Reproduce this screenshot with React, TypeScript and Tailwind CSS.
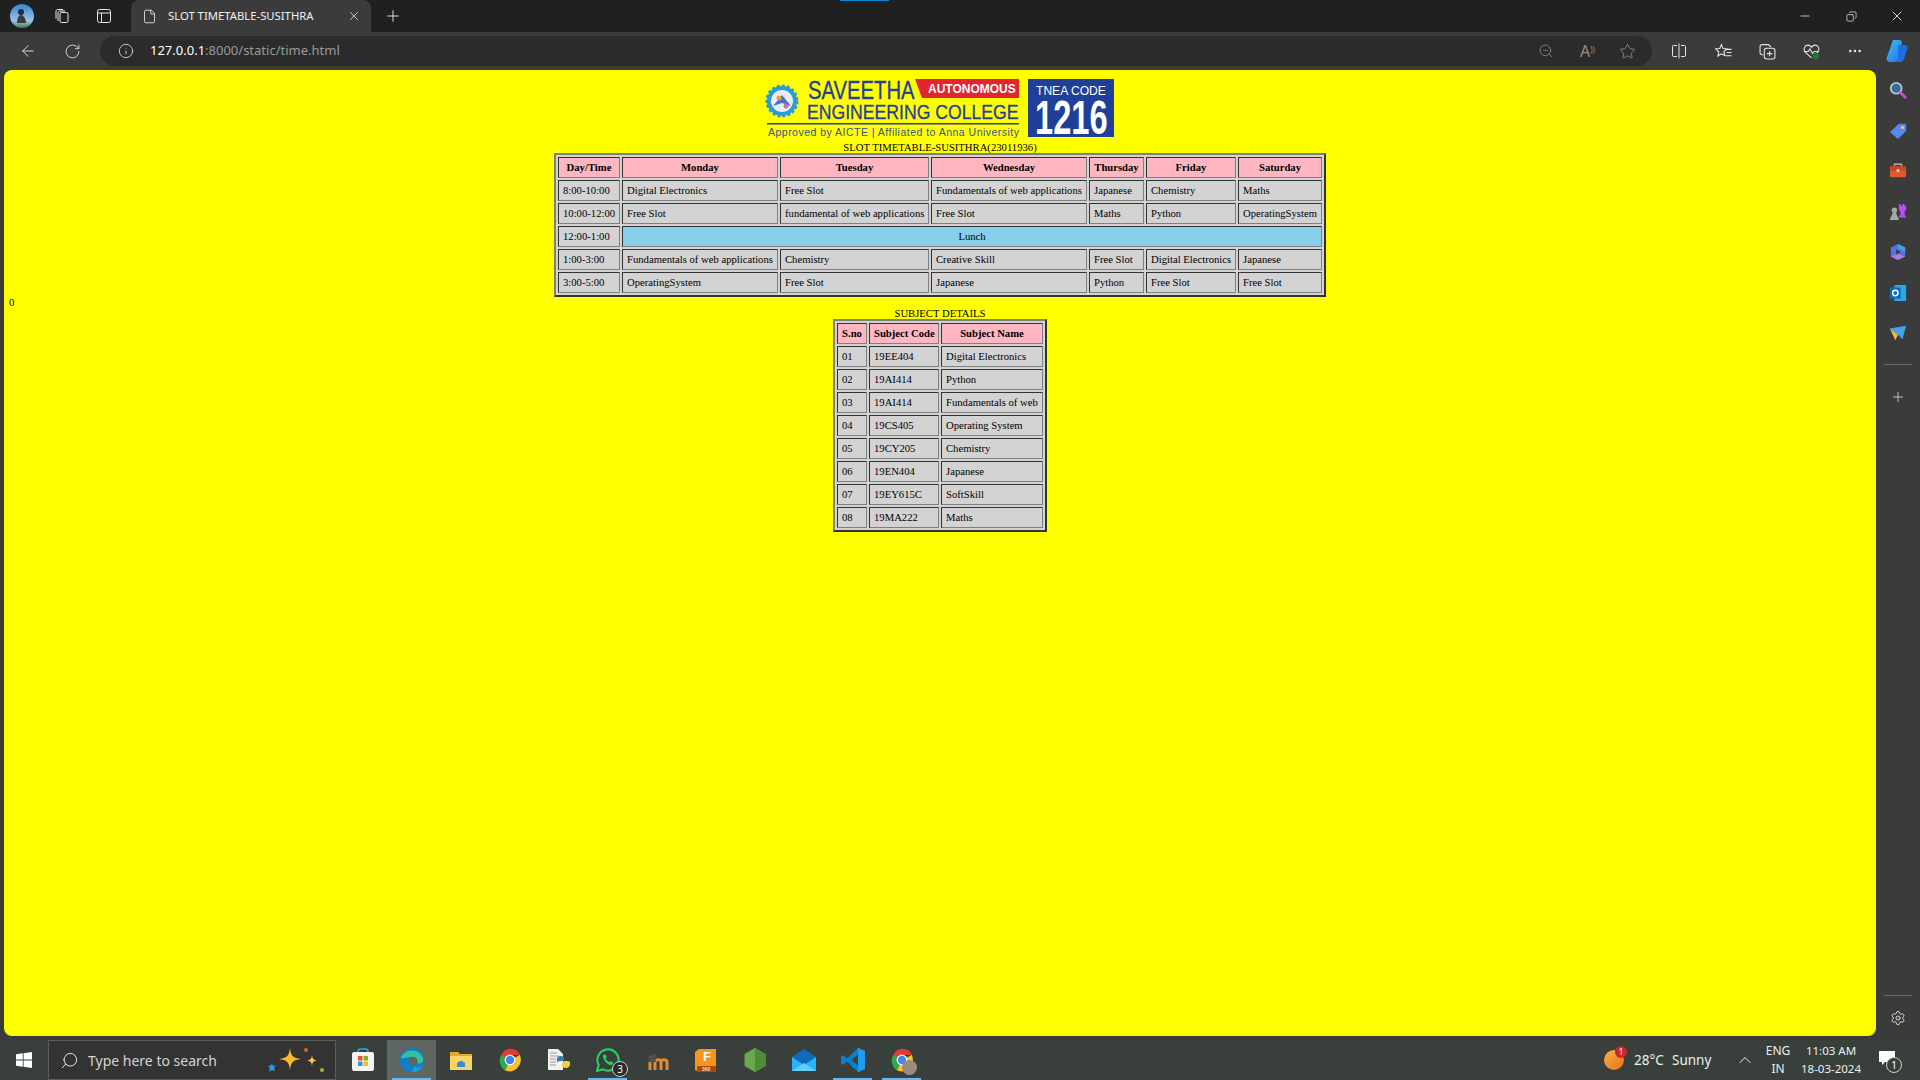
import {
  ArrowLeft,
  ChevronUp,
  Copy,
  Ellipsis,
  File,
  Info,
  Minus,
  Plus,
  RotateCw,
  Search,
  Settings,
  Star,
  X,
  ZoomOut,
} from "lucide-react";

const days = ["Monday", "Tuesday", "Wednesday", "Thursday", "Friday", "Saturday"];

const slots = [
  ["8:00-10:00", "Digital Electronics", "Free Slot", "Fundamentals of web applications", "Japanese", "Chemistry", "Maths"],
  ["10:00-12:00", "Free Slot", "fundamental of web applications", "Free Slot", "Maths", "Python", "OperatingSystem"],
  ["12:00-1:00"],
  ["1:00-3:00", "Fundamentals of web applications", "Chemistry", "Creative Skill", "Free Slot", "Digital Electronics", "Japanese"],
  ["3:00-5:00", "OperatingSystem", "Free Slot", "Japanese", "Python", "Free Slot", "Free Slot"],
];

const subjects = [
  ["01", "19EE404", "Digital Electronics"],
  ["02", "19AI414", "Python"],
  ["03", "19AI414", "Fundamentals of web"],
  ["04", "19CS405", "Operating System"],
  ["05", "19CY205", "Chemistry"],
  ["06", "19EN404", "Japanese"],
  ["07", "19EY615C", "SoftSkill"],
  ["08", "19MA222", "Maths"],
];

const slotWidths = ["w-[62px]", "w-[156px]", "w-[149px]", "w-[156px]", "w-[55px]", "w-[90px]", "w-[84px]"];
const subjectWidths = ["w-[30px]", "w-[70px]", "w-[102px]"];

const tableCls =
  "table-fixed border-separate border-spacing-[2px] border-2 border-t-[#808080] border-l-[#808080] border-r-[#333333] border-b-[#333333] bg-[#d3d3d3]";
const cellCls =
  "h-[21px] border border-t-[#333333] border-l-[#333333] border-r-[#808080] border-b-[#808080] px-[4px] pt-0 pb-[2px] whitespace-nowrap overflow-hidden";
const headCls = `${cellCls} bg-[#ffb6c1] text-center font-bold`;
const bodyCls = `${cellCls} bg-[#d3d3d3] text-left font-normal`;

function CollegeLogo() {
  return (
    <svg viewBox="0 0 350 63" className="h-[63px] w-[350px] shrink-0">
      <circle cx="17" cy="23" r="15" fill="#2b9bd8" stroke="#2b9bd8" strokeWidth="3" strokeDasharray="3 2" />
      <circle cx="17" cy="23" r="11" fill="#e9eef5" />
      <path d="M8 28l9-11 9 11-9-3z" fill="#4f6fc0" />
      <circle cx="14" cy="20" r="2.5" fill="#d9a441" />
      <circle cx="21" cy="28" r="2.5" fill="#c06fb0" />
      <text transform="translate(43 21) scale(0.765 1)" fontFamily="Liberation Sans" fontSize="26.5" fill="#23409a" stroke="#23409a" strokeWidth="0.3">
        SAVEETHA
      </text>
      <polygon points="150,1 254,1 254,20 157,20" fill="#e3262e" />
      <text x="163" y="15" fontFamily="Liberation Sans" fontSize="12" fontWeight="700" fill="#ffffff">
        AUTONOMOUS
      </text>
      <text transform="translate(42 41) scale(0.84 1)" fontFamily="Liberation Sans" fontSize="21" fill="#23409a" stroke="#23409a" strokeWidth="0.3">
        ENGINEERING COLLEGE
      </text>
      <rect x="2" y="45" width="252" height="1.5" fill="#23409a" />
      <text x="3" y="58" fontFamily="Liberation Sans" fontSize="10.5" fill="#34558f" textLength="251" lengthAdjust="spacing">
        Approved by AICTE | Affiliated to Anna University
      </text>
      <rect x="263" y="1" width="86" height="58" fill="#1f3f98" />
      <text transform="translate(271 17) scale(0.93 1)" fontFamily="Liberation Sans" fontSize="13" fill="#ffffff">
        TNEA CODE
      </text>
      <text transform="translate(270 56) scale(0.68 1)" fontFamily="Liberation Sans" fontSize="48" fontWeight="700" fill="#ffffff">
        1216
      </text>
    </svg>
  );
}

function ChromeIcon({ size = 24 }: { size?: number }) {
  return (
    <svg viewBox="0 0 24 24" width={size} height={size}>
      <path d="M12 12L3.3 7A10 10 0 0 1 21.9 7H12z" fill="#e33b2e" />
      <path d="M12 12L3.3 7A11.8 11.8 0 0 0 7 22.6L12 12z" fill="#2fa84f" />
      <path d="M12 12L21.9 7A11.8 11.8 0 0 1 7 22.6L12 12z" fill="#fbc02d" />
      <circle cx="12" cy="12" r="5.4" fill="#ffffff" />
      <circle cx="12" cy="12" r="4.2" fill="#4285f4" />
    </svg>
  );
}

function EdgeIcon() {
  return (
    <svg viewBox="0 0 24 24" width="24" height="24">
      <circle cx="12" cy="12" r="12" fill="#0f7fc9" />
      <path d="M1 10C3 2 18 -2 23 10c1 5-3 6-6 5 2-4-2-7-6-6-4 0-8 2-10 1z" fill="#35c1a0" />
      <circle cx="13" cy="13.5" r="4.5" fill="#5d6660" />
      <path d="M12 24c5 0 9-2 11-6-3 2-7 2-9 0 0 2-1 4-2 6z" fill="#1b9de2" />
    </svg>
  );
}

function TaskIcon({ name }: { name: string }) {
  if (name === "store")
    return (
      <svg viewBox="0 0 24 24" width="24" height="24">
        <path d="M7 5V3.500C7 2 8 1 9.500 1h5C16 1 17 2 17 3.500V5" fill="none" stroke="#2aa6e6" strokeWidth="1.6" />
        <rect x="1" y="4" width="22" height="19" rx="2" fill="#f3f3f3" />
        <rect x="7" y="8" width="4.5" height="4.5" fill="#e8512a" />
        <rect x="12.5" y="8" width="4.5" height="4.5" fill="#7ab51d" />
        <rect x="7" y="13.5" width="4.5" height="4.5" fill="#1d9fe0" />
        <rect x="12.5" y="13.5" width="4.5" height="4.5" fill="#fbbb14" />
      </svg>
    );
  if (name === "edge") return <EdgeIcon />;
  if (name === "folder")
    return (
      <svg viewBox="0 0 24 24" width="24" height="24">
        <path d="M1 4h8l2 2h12v16H1z" fill="#e5a92e" />
        <rect x="1" y="8" width="22" height="14" fill="#fbd466" />
        <path d="M8 19v-4l4-2.500 4 2.500v4z" fill="#2d8fd5" />
      </svg>
    );
  if (name === "chrome") return <ChromeIcon />;
  if (name === "python")
    return (
      <svg viewBox="0 0 24 24" width="24" height="24">
        <path d="M1 1h10l5 5v16H1z" fill="#f1f1f1" />
        <path d="M3 5h7M3 8h9M3 11h6M3 14h6M3 17h6" stroke="#9a9a9a" strokeWidth="1" />
        <path d="M10 11c0-2 1-3 3.500-3S17 9 17 11v2h-4c-2 0-3 1-3 2z" fill="#3b77a8" />
        <path d="M23 16c0 2-1 4-4 4s-4-1-4-3v-1h3c2 0 4-1 5-3z" fill="#f6cf3e" />
        <path d="M17 13h4c1 0 2 1 2 3h-8z" fill="#f6cf3e" />
      </svg>
    );
  if (name === "whatsapp")
    return (
      <svg viewBox="0 0 24 24" width="24" height="24">
        <path d="M1 23l1.700-6A10.600 10.600 0 1 1 7 21.300z" fill="none" stroke="#25d366" strokeWidth="2" />
        <path d="M8 6.500c-1.500 1-1.500 3 .5 6s4.500 5 7 4.500c1.500-.4 2-1.500 1.500-2.500l-2.500-1.500-1.200 1.200c-1.500-.6-3-2-3.700-3.700L10.800 9 9.500 6.500z" fill="#25d366" />
      </svg>
    );
  if (name === "moodle")
    return (
      <svg viewBox="0 0 24 24" width="24" height="24">
        <path d="M1 10l8-4 4 2-7 3z" fill="#55504c" />
        <path d="M5 22v-8M10 22v-8c0-2 6-4 6 0v8M16 14c0-3 6-3 6 0v8" fill="none" stroke="#e08a35" strokeWidth="3" />
        <path d="M5 14c1-3 4-3 5 0" fill="none" stroke="#55504c" strokeWidth="3" />
      </svg>
    );
  if (name === "fusion")
    return (
      <svg viewBox="0 0 24 24" width="24" height="24">
        <path d="M1 4l4-3h17v23H5l-4-2z" fill="#f7941d" />
        <rect x="3" y="18" width="19" height="6" rx="1" fill="#a8480b" />
        <text x="9" y="13" fontFamily="Liberation Sans" fontSize="13" fontWeight="700" fill="#ffffff">F</text>
        <text x="8" y="23" fontFamily="Liberation Sans" fontSize="5" fontWeight="700" fill="#f3d9c0">360</text>
      </svg>
    );
  if (name === "node")
    return (
      <svg viewBox="0 0 24 24" width="24" height="24">
        <path d="M12 0l10.500 6v12L12 24 1.500 18V6z" fill="#6aa84f" />
        <path d="M12 0l10.500 6v12L12 24z" fill="#4e8c3a" />
      </svg>
    );
  if (name === "mail")
    return (
      <svg viewBox="0 0 24 24" width="24" height="24">
        <path d="M0 9l12-8 12 8v14H0z" fill="#0f6cbd" />
        <path d="M0 9l12 8 12-8v14H0z" fill="#2bb4f4" />
        <path d="M0 23l12-8 12 8z" fill="#5fd0fb" />
      </svg>
    );
  if (name === "vscode")
    return (
      <svg viewBox="0 0 24 24" width="24" height="24">
        <path d="M17 0l7 3v18l-7 3L6 13.500 2 17l-2-1.500v-7L2 7l4 3.500z" fill="#0a7fcf" />
        <path d="M17 6.500L10.500 12 17 17.500z" fill="#39403c" />
        <path d="M17 0l7 3v18l-7 3z" fill="#1f9cf0" />
      </svg>
    );
  return (
    <div className="relative">
      <ChromeIcon />
      <span className="absolute -bottom-[3px] -right-[3px] h-[15px] w-[15px] rounded-full bg-[#9a8c7c]" />
    </div>
  );
}

const taskItems = [
  { name: "store" },
  { name: "edge", active: true },
  { name: "folder" },
  { name: "chrome" },
  { name: "python" },
  { name: "whatsapp", running: true, badge: "3" },
  { name: "moodle" },
  { name: "fusion" },
  { name: "node" },
  { name: "mail" },
  { name: "vscode", running: true },
  { name: "chromeProfile", running: true },
];

function SideIcon({ name }: { name: string }) {
  if (name === "search")
    return (
      <svg viewBox="0 0 20 20" width="18" height="18">
        <circle cx="8" cy="8" r="6" fill="#2f6f96" stroke="#b9c4cc" strokeWidth="2" />
        <path d="M13 13l5 5" stroke="#c94fd8" strokeWidth="3" strokeLinecap="round" />
      </svg>
    );
  if (name === "tag")
    return (
      <svg viewBox="0 0 20 20" width="18" height="18">
        <path d="M1 11L11 2h8v8l-9 9z" fill="#5b84f0" strokeLinejoin="round" />
        <circle cx="15" cy="6" r="1.800" fill="#f2c94c" />
      </svg>
    );
  if (name === "tools")
    return (
      <svg viewBox="0 0 20 20" width="18" height="18">
        <path d="M6 5V2.500h8V5" fill="none" stroke="#b0b0b0" strokeWidth="1.500" />
        <rect x="1" y="5" width="18" height="12" rx="1.500" fill="#e05a2b" />
        <rect x="1" y="5" width="18" height="5" fill="#c9481f" />
        <rect x="8.500" y="8" width="3" height="3" fill="#d9d9d9" />
      </svg>
    );
  if (name === "chess")
    return (
      <svg viewBox="0 0 20 20" width="18" height="18">
        <path d="M11 1h2v2h2V1h2v2h2V1v7l-1.500 1v4l1.500 2v1h-8v-1l1.500-2V9L11 8z" fill="#b44ff0" />
        <circle cx="6" cy="8" r="3" fill="#a8a8a8" />
        <path d="M1 19c0-3 2-4 3-8h4c1 4 3 5 3 8z" fill="#a8a8a8" />
      </svg>
    );
  if (name === "m365")
    return (
      <svg viewBox="0 0 20 20" width="18" height="18">
        <path d="M10 1l8 4v10l-8 4-8-4V5z" fill="#5b6fe0" />
        <path d="M10 1l8 4v5l-8-4z" fill="#37a5e8" />
        <path d="M2 15l8 4 8-4-8-3z" fill="#a77fe0" />
        <path d="M8 7l5 3-5 3z" fill="#3b3b3b" />
      </svg>
    );
  if (name === "outlook")
    return (
      <svg viewBox="0 0 20 20" width="18" height="18">
        <rect x="6" y="1" width="13" height="18" rx="1" fill="#28a8ea" />
        <rect x="1" y="4" width="12" height="12" rx="1" fill="#0f6cbd" />
        <circle cx="7" cy="10" r="3" fill="none" stroke="#ffffff" strokeWidth="1.600" />
      </svg>
    );
  return (
    <svg viewBox="0 0 20 20" width="18" height="18">
      <path d="M1 5l18-3-4 15-5-5z" fill="#3fa5ee" />
      <path d="M1 5l9 7-3 6z" fill="#f2b93b" />
    </svg>
  );
}

function TitleBar() {
  return (
    <div className="relative flex h-8 shrink-0 items-end bg-[#202020] text-[#f0f0f0]">
      <div className="flex h-8 w-[131px] shrink-0 items-center">
        <svg viewBox="0 0 24 24" width="24" height="24" className="ml-[10px]">
          <defs>
            <linearGradient id="avatarSky" x1="0" y1="0" x2="0" y2="1">
              <stop offset="0" stopColor="#2f86d6" />
              <stop offset="0.7" stopColor="#9ec3e0" />
              <stop offset="1" stopColor="#3f7a4f" />
            </linearGradient>
          </defs>
          <circle cx="12" cy="12" r="12" fill="url(#avatarSky)" />
          <circle cx="11" cy="8" r="3" fill="#2a2a35" />
          <path d="M7 19c0-5 2-8 4-8s5 3 5 8z" fill="#3a3a48" />
        </svg>
        <svg viewBox="0 0 16 16" width="16" height="16" fill="none" stroke="#e8e8e8" className="ml-[20px]">
          <rect x="6" y="4.500" width="8" height="10" rx="1.500" />
          <path d="M4 13V4.500C4 3.500 5 3 6 3h5M2 11V3c0-1 1-1.500 2-1.500h5" />
        </svg>
        <svg viewBox="0 0 16 16" width="16" height="16" fill="none" stroke="#e8e8e8" className="ml-[26px]">
          <rect x="1.500" y="1.500" width="13" height="13" rx="2" />
          <path d="M1.500 5h13M5.500 5v9.500" />
        </svg>
      </div>
      <div className="flex h-8 w-[240px] shrink-0 items-center rounded-t-lg bg-[#3b3b3b] pl-[11px] pr-[10px]">
        <File size={15} strokeWidth={1.3} />
        <span className="ml-[11px] font-['Noto_Sans',sans-serif] text-[11.3px]">SLOT TIMETABLE-SUSITHRA</span>
        <X size={14} strokeWidth={1.3} className="ml-auto" />
      </div>
      <div className="flex h-8 w-11 items-center justify-center">
        <Plus size={18} strokeWidth={1.2} />
      </div>
      <span className="absolute left-[840px] top-0 h-px w-[49px] bg-[#0a84d8]" />
      <div className="ml-auto flex h-8 items-center">
        <span className="flex w-[46px] justify-center"><Minus size={14} strokeWidth={1.3} /></span>
        <span className="flex w-[46px] justify-center"><Copy size={11} strokeWidth={1.5} className="-scale-x-100" /></span>
        <span className="flex w-[46px] justify-center"><X size={16} strokeWidth={1.3} /></span>
      </div>
    </div>
  );
}

function AddressBar() {
  return (
    <div className="flex h-[38px] shrink-0 items-center bg-[#3b3b3b] text-[#e6e6e6]">
      <div className="flex w-[100px] shrink-0 items-center">
        <ArrowLeft size={18} strokeWidth={1.2} className="ml-[19px]" />
        <RotateCw size={17} strokeWidth={1.2} className="ml-[27px]" />
      </div>
      <div className="flex h-[30px] w-[1552px] shrink-0 items-center rounded-full bg-[#2b2b2b] pl-[18px]">
        <Info size={16} strokeWidth={1.2} />
        <span className="ml-[16px] font-['Noto_Sans',sans-serif] text-[13px]">
          <span className="text-white">127.0.0.1</span>
          <span className="text-[#9a9a9a]">:8000/static/time.html</span>
        </span>
        <div className="ml-auto flex items-center pr-[16px] text-[#8f8f8f]">
          <ZoomOut size={16} strokeWidth={1.2} />
          <span className="ml-[26px] font-['Noto_Sans',sans-serif] text-[16px] leading-none">A<sup className="text-[8px]">))</sup></span>
          <Star size={17} strokeWidth={1.2} className="ml-[24px]" />
        </div>
      </div>
      <div className="flex flex-1 items-center">
        <svg viewBox="0 0 16 16" width="16" height="16" fill="none" stroke="#e6e6e6" className="ml-[19px]">
          <path d="M6 2.500H2.500a1 1 0 0 0-1 1v9a1 1 0 0 0 1 1H6M10 2.500h3.500a1 1 0 0 1 1 1v9a1 1 0 0 1-1 1H10M8 .5v15" />
        </svg>
        <svg viewBox="0 0 16 16" width="17" height="17" fill="none" stroke="#e6e6e6" className="ml-[28px]">
          <path d="M6 1.500l1.500 3.700 3.800.3-2.900 2.500.9 3.800L6 10.200 2.700 12.300l.9-3.800L.7 5.500l3.800-.3zM11 6h4.500M11 9h4.500M10 12h5.500" />
        </svg>
        <svg viewBox="0 0 16 16" width="17" height="17" fill="none" stroke="#e6e6e6" className="ml-[27px]">
          <path d="M4 11H3a2 2 0 0 1-2-2V3.500A2 2 0 0 1 3 1.500h5c1.500 0 2.500 1 3 2.500" />
          <rect x="5" y="5" width="10" height="10" rx="2" />
          <path d="M10 7.500v5M7.500 10h5" />
        </svg>
        <svg viewBox="0 0 16 16" width="17" height="17" fill="none" stroke="#e6e6e6" className="ml-[27px]">
          <path d="M8 14L2 8.500C0 6 1.500 2 4.500 2 6 2 7.200 2.800 8 4c.8-1.200 2-2 3.500-2C14.500 2 16 6 14 8.500L13 9.500M1 8h4l1.500-2.500L9 10l1.500-2h4" />
          <circle cx="12" cy="12.500" r="3" fill="#1f7a2f" stroke="none" />
        </svg>
        <Ellipsis size={16} strokeWidth={1.8} className="ml-[27px]" />
        <svg viewBox="0 0 24 24" width="24" height="24" className="ml-[22px]">
          <defs>
            <linearGradient id="copilotA" x1="0" y1="0" x2="1" y2="1">
              <stop offset="0" stopColor="#35c4f0" />
              <stop offset="1" stopColor="#2f6fe8" />
            </linearGradient>
          </defs>
          <path d="M8 1h6c2 0 3 1 3 3L13 20c-.5 2-2 3-4 3H5c-3 0-4-3-3-5z" fill="url(#copilotA)" />
          <path d="M13 6h7c3 0 3 3 2 5l-3 9c-.6 2-2 3-4 3H9c2 0 3-1 4-3z" fill="#1c6fe0" />
        </svg>
      </div>
    </div>
  );
}

function Taskbar() {
  return (
    <div className="mt-1 flex h-10 shrink-0 items-stretch bg-[#39403c] text-[#eeeeee]">
      <div className="flex w-12 shrink-0 items-center justify-center">
        <svg viewBox="0 0 16 16" width="16" height="16" fill="#ffffff">
          <path d="M0 2.300l6.800-1v6.300H0zM7.600 1.200L16 0v7.600H7.600zM0 8.400h6.800v6.300L0 13.700zM7.600 8.400H16V16l-8.400-1.200z" />
        </svg>
      </div>
      <div className="flex w-[288px] shrink-0 items-center border border-[#5a5f5c] bg-[#333333] pl-[11px]">
        <Search size={19} strokeWidth={1.2} className="-scale-x-100" />
        <span className="ml-[9px] font-['Noto_Sans',sans-serif] text-[14px] text-[#d4d4d4]">Type here to search</span>
        <svg viewBox="0 0 60 28" width="60" height="28" className="ml-auto mr-[9px]">
          <path d="M24 2c1 8 3 10 11 11-8 1-10 3-11 11-1-8-3-10-11-11 8-1 10-3 11-11z" fill="#fbb92d" />
          <path d="M46 9c.5 4 1.500 5 5 5.500-3.500.5-4.500 1.500-5 5.500-.5-4-1.500-5-5-5.500 3.500-.5 4.500-1.500 5-5.500z" fill="#fbc63f" />
          <path d="M6 17l1 3 3-1-2 3 1 3-3-1-3 2 1-4-2-2 3-.5z" fill="#2c9fe0" />
          <circle cx="40" cy="4" r="2" fill="#d9662f" />
          <circle cx="56" cy="24" r="2" fill="#8bbf3a" />
        </svg>
      </div>
      <div className="ml-[2px] flex shrink-0">
        {taskItems.map((item) => (
          <div
            key={item.name}
            className={`relative flex w-[49px] items-center justify-center ${item.active ? "bg-[#5d6660]" : ""}`}
          >
            <TaskIcon name={item.name} />
            {item.badge && (
              <span className="absolute bottom-[3px] right-[4px] flex h-4 w-4 items-center justify-center rounded-full border border-[#cfcfcf] bg-[#2b2b2b] font-['Noto_Sans',sans-serif] text-[10px] text-white">
                {item.badge}
              </span>
            )}
            {(item.active || item.running) && (
              <span className="absolute bottom-0 left-[5px] right-[5px] h-[2px] bg-[#6fb4ec]" />
            )}
          </div>
        ))}
      </div>
      <div className="ml-auto flex items-center whitespace-nowrap font-['Noto_Sans',sans-serif] text-[12px]">
        <div className="relative h-5 w-5 rounded-full bg-gradient-to-br from-[#fbb040] to-[#e8701a]">
          <span className="absolute -right-[3px] -top-[4px] flex h-3 w-3 items-center justify-center rounded-full bg-[#c92a2a] text-[8px] text-white">1</span>
        </div>
        <span className="ml-[10px] w-[29px] text-[13.5px]">28°C</span>
        <span className="ml-[9px] w-[38px] text-[13.5px]">Sunny</span>
        <ChevronUp size={20} strokeWidth={1.2} className="ml-[25px]" />
        <div className="ml-[10px] flex w-[26px] flex-col items-center leading-[18px]">
          <span>ENG</span>
          <span>IN</span>
        </div>
        <div className="ml-[10px] flex w-[60px] flex-col items-center text-[11.5px] leading-[18px]">
          <span>11:03 AM</span>
          <span>18-03-2024</span>
        </div>
        <div className="relative ml-[18px] mr-[25px] h-5 w-4">
          <svg viewBox="0 0 16 16" width="16" height="16" fill="#ffffff">
            <path d="M0 1h16v11H6l-3 3v-3H0z" />
          </svg>
          <span className="absolute -bottom-[3px] -right-[7px] flex h-4 w-4 items-center justify-center rounded-full border border-[#cfcfcf] bg-[#39403c] text-[10px] text-white">1</span>
        </div>
      </div>
    </div>
  );
}

const sideNames = ["search", "tag", "tools", "chess", "m365", "outlook", "plane"];

function SidePane() {
  return (
    <div className="flex w-11 shrink-0 flex-col items-center bg-[#3b3b3b] text-[#e0e0e0]">
      {sideNames.map((n) => (
        <div key={n} className="flex h-[40.5px] w-full shrink-0 items-center justify-center">
          <SideIcon name={n} />
        </div>
      ))}
      <span className="mt-[10px] h-px w-7 bg-[#6a6a6a]" />
      <Plus size={16} strokeWidth={1.2} className="mt-[24px]" />
      <span className="mt-auto h-px w-7 bg-[#6a6a6a]" />
      <Settings size={16} strokeWidth={1.4} className="mb-[10px] mt-[14px]" />
    </div>
  );
}

export default function App() {
  return (
    <div className="flex h-[1080px] w-[1920px] flex-col overflow-hidden bg-[#3b3b3b]">
      <TitleBar />
      <AddressBar />
      <div className="flex min-h-0 flex-1">
        <main className="relative ml-1 flex flex-1 flex-col items-center rounded-lg bg-[#ffff00] pt-2 font-['Liberation_Serif',serif] text-[10.67px] leading-[12px] text-black">
          <span className="absolute left-[5px] top-[226px]">0</span>
          <CollegeLogo />
          <table className={`${tableCls} w-[772px]`}>
            <caption className="h-3 whitespace-nowrap bg-[#ffff00]">SLOT TIMETABLE-SUSITHRA(23011936)</caption>
            <thead>
              <tr>
                {["Day/Time", ...days].map((d, i) => (
                  <th key={d} className={`${headCls} ${slotWidths[i]}`}>{d}</th>
                ))}
              </tr>
            </thead>
            <tbody>
              {slots.map((row) => (
                <tr key={row[0]}>
                  {row.length === 1 ? (
                    <>
                      <td className={bodyCls}>{row[0]}</td>
                      <td colSpan={6} className={`${cellCls} bg-[#87ceeb] text-center`}>Lunch</td>
                    </>
                  ) : (
                    row.map((c, i) => <td key={i} className={bodyCls}>{c}</td>)
                  )}
                </tr>
              ))}
            </tbody>
          </table>
          <table className={`${tableCls} mt-[10px] w-[214px]`}>
            <caption className="h-3 whitespace-nowrap bg-[#ffff00]">SUBJECT DETAILS</caption>
            <thead>
              <tr>
                {["S.no", "Subject Code", "Subject Name"].map((h, i) => (
                  <th key={h} className={`${headCls} ${subjectWidths[i]}`}>{h}</th>
                ))}
              </tr>
            </thead>
            <tbody>
              {subjects.map((row) => (
                <tr key={row[0]}>
                  {row.map((c, i) => <td key={i} className={bodyCls}>{c}</td>)}
                </tr>
              ))}
            </tbody>
          </table>
        </main>
        <SidePane />
      </div>
      <Taskbar />
    </div>
  );
}
